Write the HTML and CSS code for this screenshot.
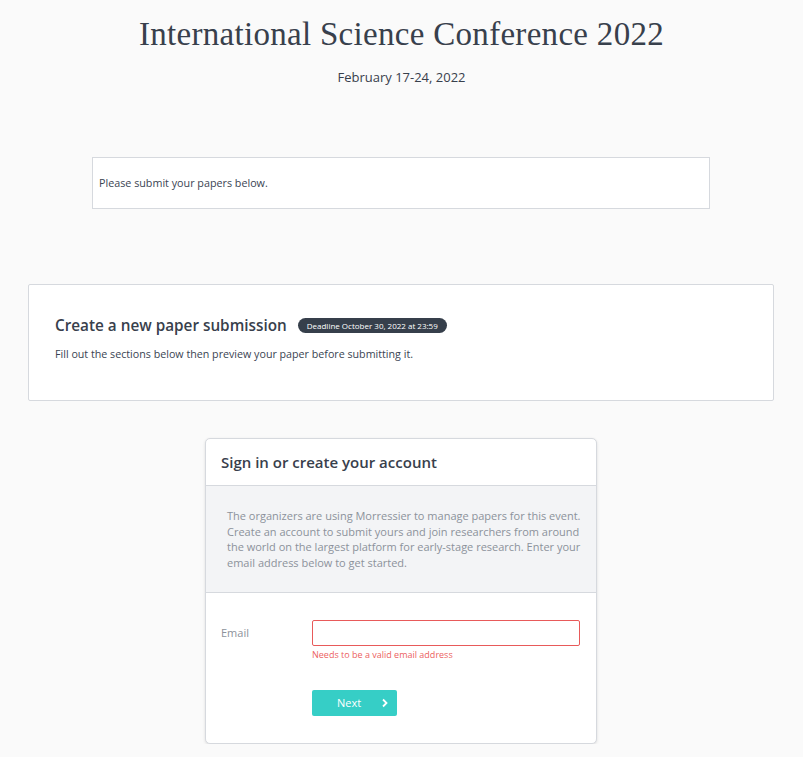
FILE: index.html
```html
<!DOCTYPE html>
<html>
<head>
<meta charset="utf-8">
<link rel="stylesheet" href="styles.css">
</head>
<body>
<header class="hero">
  <h1 class="title">International Science Conference 2022</h1>
  <p class="date">February 17-24, 2022</p>
</header>
<section class="notice">Please submit your papers below.</section>
<section class="submission">
  <div class="sub-head">
    <h2 class="sub-title">Create a new paper submission</h2>
    <span class="badge">Deadline October 30, 2022 at 23:59</span>
  </div>
  <p class="sub-text">Fill out the sections below then preview your paper before submitting it.</p>
</section>
<section class="card">
  <div class="card-head">Sign in or create your account</div>
  <div class="card-info">The organizers are using Morressier to manage papers for this event. Create an account to submit yours and join researchers from around the world on the largest platform for early-stage research. Enter your email address below to get started.</div>
  <div class="card-body">
    <div class="field">
      <label class="label" for="email">Email</label>
      <div class="control">
        <input id="email" class="input" type="text">
        <div class="error">Needs to be a valid email address</div>
      </div>
    </div>
    <div class="actions">
      <button class="btn">Next<svg class="chev" width="8" height="10" viewBox="0 0 8 10"><path d="M2 1.5 L5.5 5 L2 8.5" fill="none" stroke="#fff" stroke-width="1.8"/></svg></button>
    </div>
  </div>
</section>
</body>
</html>
```

FILE: styles.css
```css
* { box-sizing: border-box; }
html, body { margin: 0; padding: 0; }
body {
  background: #fafafa;
  font-family: "Open Sans", "Liberation Sans", sans-serif;
  color: #3a4452;
  width: 803px;
}
.hero { text-align: center; padding-top: 14px; }
.title {
  margin: 0;
  font-family: "Liberation Serif", "DejaVu Serif", serif;
  font-weight: 400;
  font-size: 33px;
  line-height: 40px;
  color: #38404c;
  letter-spacing: 0.3px;
}
.date { margin: 14px 0 0; font-size: 13px; line-height: 18px; color: #38404c; }
.notice {
  margin: 71px 0 0 92px;
  width: 618px;
  height: 52px;
  background: #fff;
  border: 1px solid #d6d9de;
  padding: 17px 6px 18px;
  font-size: 10.75px;
  line-height: 16px;
  color: #3a4452;
}
.submission {
  margin: 75px 0 0 28px;
  width: 746px;
  height: 117px;
  background: #fff;
  border: 1px solid #d6d9de;
  border-radius: 2px;
  padding: 30px 26px;
}
.sub-head { display: flex; align-items: center; gap: 11px; }
.sub-title { margin: 0; font-size: 15.3px; line-height: 20px; font-weight: 600; color: #38404c; }
.badge {
  background: #363f4b;
  color: #fff;
  font-size: 8px;
  line-height: 15px;
  height: 15px;
  padding: 0 9px;
  border-radius: 8px;
}
.sub-text { margin: 11px 0 0; font-size: 10.7px; line-height: 16px; color: #3a4452; }
.card {
  margin: 37px 0 0 205px;
  width: 392px;
  background: #fff;
  border: 1px solid #d6d9de;
  border-radius: 5px;
  box-shadow: 0 1px 3px rgba(0,0,0,0.12);
  overflow: hidden;
}
.card-head {
  height: 47px;
  padding: 13px 15px;
  font-size: 15px;
  line-height: 20px;
  font-weight: 600;
  color: #38404c;
  border-bottom: 1px solid #d6d9de;
}
.card-info {
  background: #f3f4f6;
  padding: 22px 14px 21px 21px;
  font-size: 11px;
  line-height: 15.7px;
  color: #8c929b;
  border-bottom: 1px solid #d6d9de;
}
.card-body { padding: 27px 15px 27px; }
.field { display: flex; }
.label { width: 91px; font-size: 11px; line-height: 16px; color: #8c929b; padding-top: 5px; }
.control { width: 268px; }
.input {
  display: block;
  width: 268px;
  height: 26px;
  border: 1px solid #e85a5a;
  border-radius: 2px;
  outline: none;
  background: #fff;
}
.error { font-size: 9px; line-height: 14px; color: #ec5f5f; margin-top: 2px; }
.actions { margin: 28px 0 0 91px; }
.btn {
  display: flex;
  align-items: center;
  justify-content: space-between;
  width: 85px;
  height: 26px;
  background: #36cec6;
  border: none;
  border-radius: 2px;
  padding: 0 8px 0 25px;
  font-family: "Open Sans", sans-serif;
  font-size: 11px;
  color: #fff;
}
.chev { display: block; }
```
